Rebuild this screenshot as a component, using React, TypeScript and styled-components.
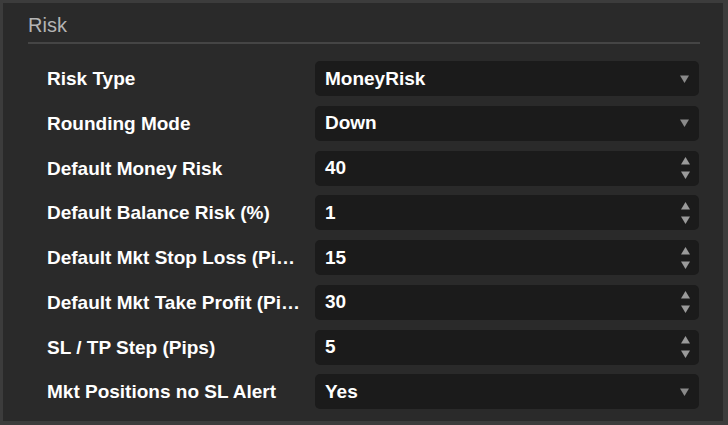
import React from "react";
import styled, { createGlobalStyle } from "styled-components";

const Global = createGlobalStyle`
  html, body { margin: 0; padding: 0; background: #3c3c3c; }
  body { font-family: "Liberation Sans", Arial, sans-serif; }
`;

const Frame = styled.div`
  width: 728px;
  height: 425px;
  box-sizing: border-box;
  border-style: solid;
  border-color: #3c3c3c;
  border-width: 3px 5px 4px 3px;
  background: #2a2a2a;
  display: flex;
  flex-direction: column;
  padding: 0 23px 0 25px;
`;

const Header = styled.div`
  padding: 10px 0 5px;
  line-height: 24px;
  font-size: 20px;
  color: #b4b4b4;
  border-bottom: 2px solid #454545;
`;

const Rows = styled.div`
  display: grid;
  grid-template-columns: 254px 1fr;
  column-gap: 14px;
  row-gap: 9.75px;
  grid-auto-rows: 35px;
  padding: 17px 1px 0 19px;
`;

const Label = styled.div`
  color: #ffffff;
  font-weight: bold;
  font-size: 19px;
  line-height: 35px;
  white-space: nowrap;
  overflow: hidden;
  text-overflow: ellipsis;
`;

const Field = styled.div`
  position: relative;
  background: #1b1b1b;
  border-radius: 5px;
  display: flex;
  align-items: center;
  padding: 0 10px;
  color: #ffffff;
  font-weight: bold;
  font-size: 19px;
`;

const Value = styled.span`
  flex: 1;
`;

const Spinner = styled.div`
  display: flex;
  flex-direction: column;
  gap: 6px;
  margin-right: -1px;
`;

const Arrow = styled.svg`
  display: block;
`;

type Row = { label: string; value: string; kind: "select" | "number" };

const rows: Row[] = [
  { label: "Risk Type", value: "MoneyRisk", kind: "select" },
  { label: "Rounding Mode", value: "Down", kind: "select" },
  { label: "Default Money Risk", value: "40", kind: "number" },
  { label: "Default Balance Risk (%)", value: "1", kind: "number" },
  { label: "Default Mkt Stop Loss (Pips)", value: "15", kind: "number" },
  { label: "Default Mkt Take Profit (Pips)", value: "30", kind: "number" },
  { label: "SL / TP Step (Pips)", value: "5", kind: "number" },
  { label: "Mkt Positions no SL Alert", value: "Yes", kind: "select" },
];

const Down = ({ c = "#8a8a8a" }: { c?: string }) => (
  <Arrow width="9" height="8" viewBox="0 0 9 8">
    <path d="M0 0.5 H9 L4.5 8 Z" fill={c} />
  </Arrow>
);
const Up = ({ c = "#9a9a9a" }: { c?: string }) => (
  <Arrow width="9" height="8" viewBox="0 0 9 8">
    <path d="M0 7.5 H9 L4.5 0 Z" fill={c} />
  </Arrow>
);

export default function App() {
  return (
    <>
      <Global />
      <Frame>
        <Header>Risk</Header>
        <Rows>
          {rows.map((r) => (
            <React.Fragment key={r.label}>
              <Label title={r.label}>{r.label}</Label>
              <Field>
                <Value>{r.value}</Value>
                {r.kind === "select" ? (
                  <Down />
                ) : (
                  <Spinner>
                    <Up />
                    <Down c="#9a9a9a" />
                  </Spinner>
                )}
              </Field>
            </React.Fragment>
          ))}
        </Rows>
      </Frame>
    </>
  );
}
